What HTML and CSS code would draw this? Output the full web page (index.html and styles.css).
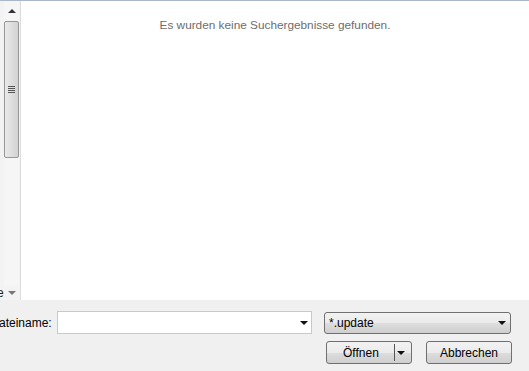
FILE: index.html
```html
<!DOCTYPE html>
<html lang="de">
<head>
    <meta charset="UTF-8">
    <title>Öffnen</title>
    <link rel="stylesheet" href="styles.css">
</head>
<body>
    <div class="dialog">
        <div class="top">
            <div class="side">
                <div class="scrollbar">
                    <div class="arrow-up"></div>
                    <div class="thumb"><div class="grip"></div></div>
                </div>
                <div class="side-foot">e <span class="tri"></span></div>
            </div>
            <div class="results">
                <p class="empty">Es wurden keine Suchergebnisse gefunden.</p>
            </div>
        </div>
        <div class="bottom">
            <div class="row">
                <label class="name-label">ateiname:</label>
                <div class="name-input"><span class="tri"></span></div>
                <div class="filter">*.update<span class="tri"></span></div>
            </div>
            <div class="row buttons">
                <button class="btn open">Öffnen<span class="split"><span class="tri"></span></span></button>
                <button class="btn cancel">Abbrechen</button>
            </div>
        </div>
    </div>
</body>
</html>
```

FILE: styles.css
```css
body {
    margin: 0;
    width: 529px;
    height: 371px;
    overflow: hidden;
    background: #f0f0f0;
    font-family: "Liberation Sans", Arial, sans-serif;
    font-size: 12px;
    color: #000000;
}
.dialog {
    display: flex;
    flex-direction: column;
    height: 371px;
}
.top {
    display: flex;
    height: 300px;
    border-top: 1px solid #a9b8c9;
    box-sizing: border-box;
}
.side {
    width: 20px;
    background: #f3f3f3;
    border-right: 1px solid #dcdcdc;
    display: flex;
    flex-direction: column;
}
.scrollbar {
    flex: 1;
    margin-left: 4px;
    width: 15px;
    background: #f6f6f6;
    display: flex;
    flex-direction: column;
}
.arrow-up {
    height: 20px;
    position: relative;
}
.arrow-up::after {
    content: "";
    position: absolute;
    left: 4px;
    top: 8px;
    border-left: 4px solid transparent;
    border-right: 4px solid transparent;
    border-bottom: 4px solid #333333;
}
.thumb {
    height: 137px;
    border: 1px solid #979797;
    border-radius: 2px;
    background: linear-gradient(to right, #eaeaea, #dedede 50%, #d2d2d2);
    box-sizing: border-box;
    display: flex;
    align-items: center;
    justify-content: center;
}
.grip {
    width: 7px;
    height: 7px;
    background: repeating-linear-gradient(to bottom, #555555 0, #555555 1px, transparent 1px, transparent 2px);
}
.side-foot {
    height: 14px;
    font-size: 12px;
    line-height: 12px;
    color: #1e1e1e;
    margin-left: -3px;
    display: flex;
    align-items: center;
    gap: 4px;
}
.side-foot .tri {
    border-top-color: #777777;
}
.results {
    flex: 1;
    background: #ffffff;
}
.empty {
    margin: 17px 0 0;
    text-align: center;
    color: #6d6d6d;
    font-size: 11.8px;
}
.bottom {
    flex: 1;
    padding: 11px 17px 0 0;
    display: flex;
    flex-direction: column;
    gap: 7px;
}
.row {
    display: flex;
    align-items: center;
}
.name-label {
    width: 58px;
    margin-left: -1px;
}
.name-input {
    width: 255px;
    height: 23px;
    background: #ffffff;
    border: 1px solid #c9c9c9;
    box-sizing: border-box;
    display: flex;
    align-items: center;
    justify-content: flex-end;
    padding-right: 3px;
}
.tri {
    display: inline-block;
    border-left: 4px solid transparent;
    border-right: 4px solid transparent;
    border-top: 4px solid #111111;
}
.filter {
    margin-left: 12px;
    width: 187px;
    height: 22px;
    border: 1px solid #707070;
    border-radius: 3px;
    background: linear-gradient(to bottom, #f2f2f2, #ebebeb 50%, #dddddd 51%, #cfcfcf);
    box-sizing: border-box;
    display: flex;
    align-items: center;
    justify-content: space-between;
    padding: 0 4px 0 4px;
}
.buttons {
    justify-content: flex-end;
    gap: 14px;
}
.btn {
    width: 86px;
    height: 23px;
    border: 1px solid #707070;
    border-radius: 3px;
    background: linear-gradient(to bottom, #f2f2f2, #ebebeb 50%, #dddddd 51%, #cfcfcf);
    font-family: inherit;
    font-size: 12px;
    color: #000000;
    padding: 0;
    box-sizing: border-box;
}
.open {
    display: flex;
    align-items: center;
    padding-left: 16px;
    gap: 15px;
}
.split {
    height: 17px;
    border-left: 1px solid #555555;
    display: flex;
    align-items: center;
    padding-left: 2px;
}
```
